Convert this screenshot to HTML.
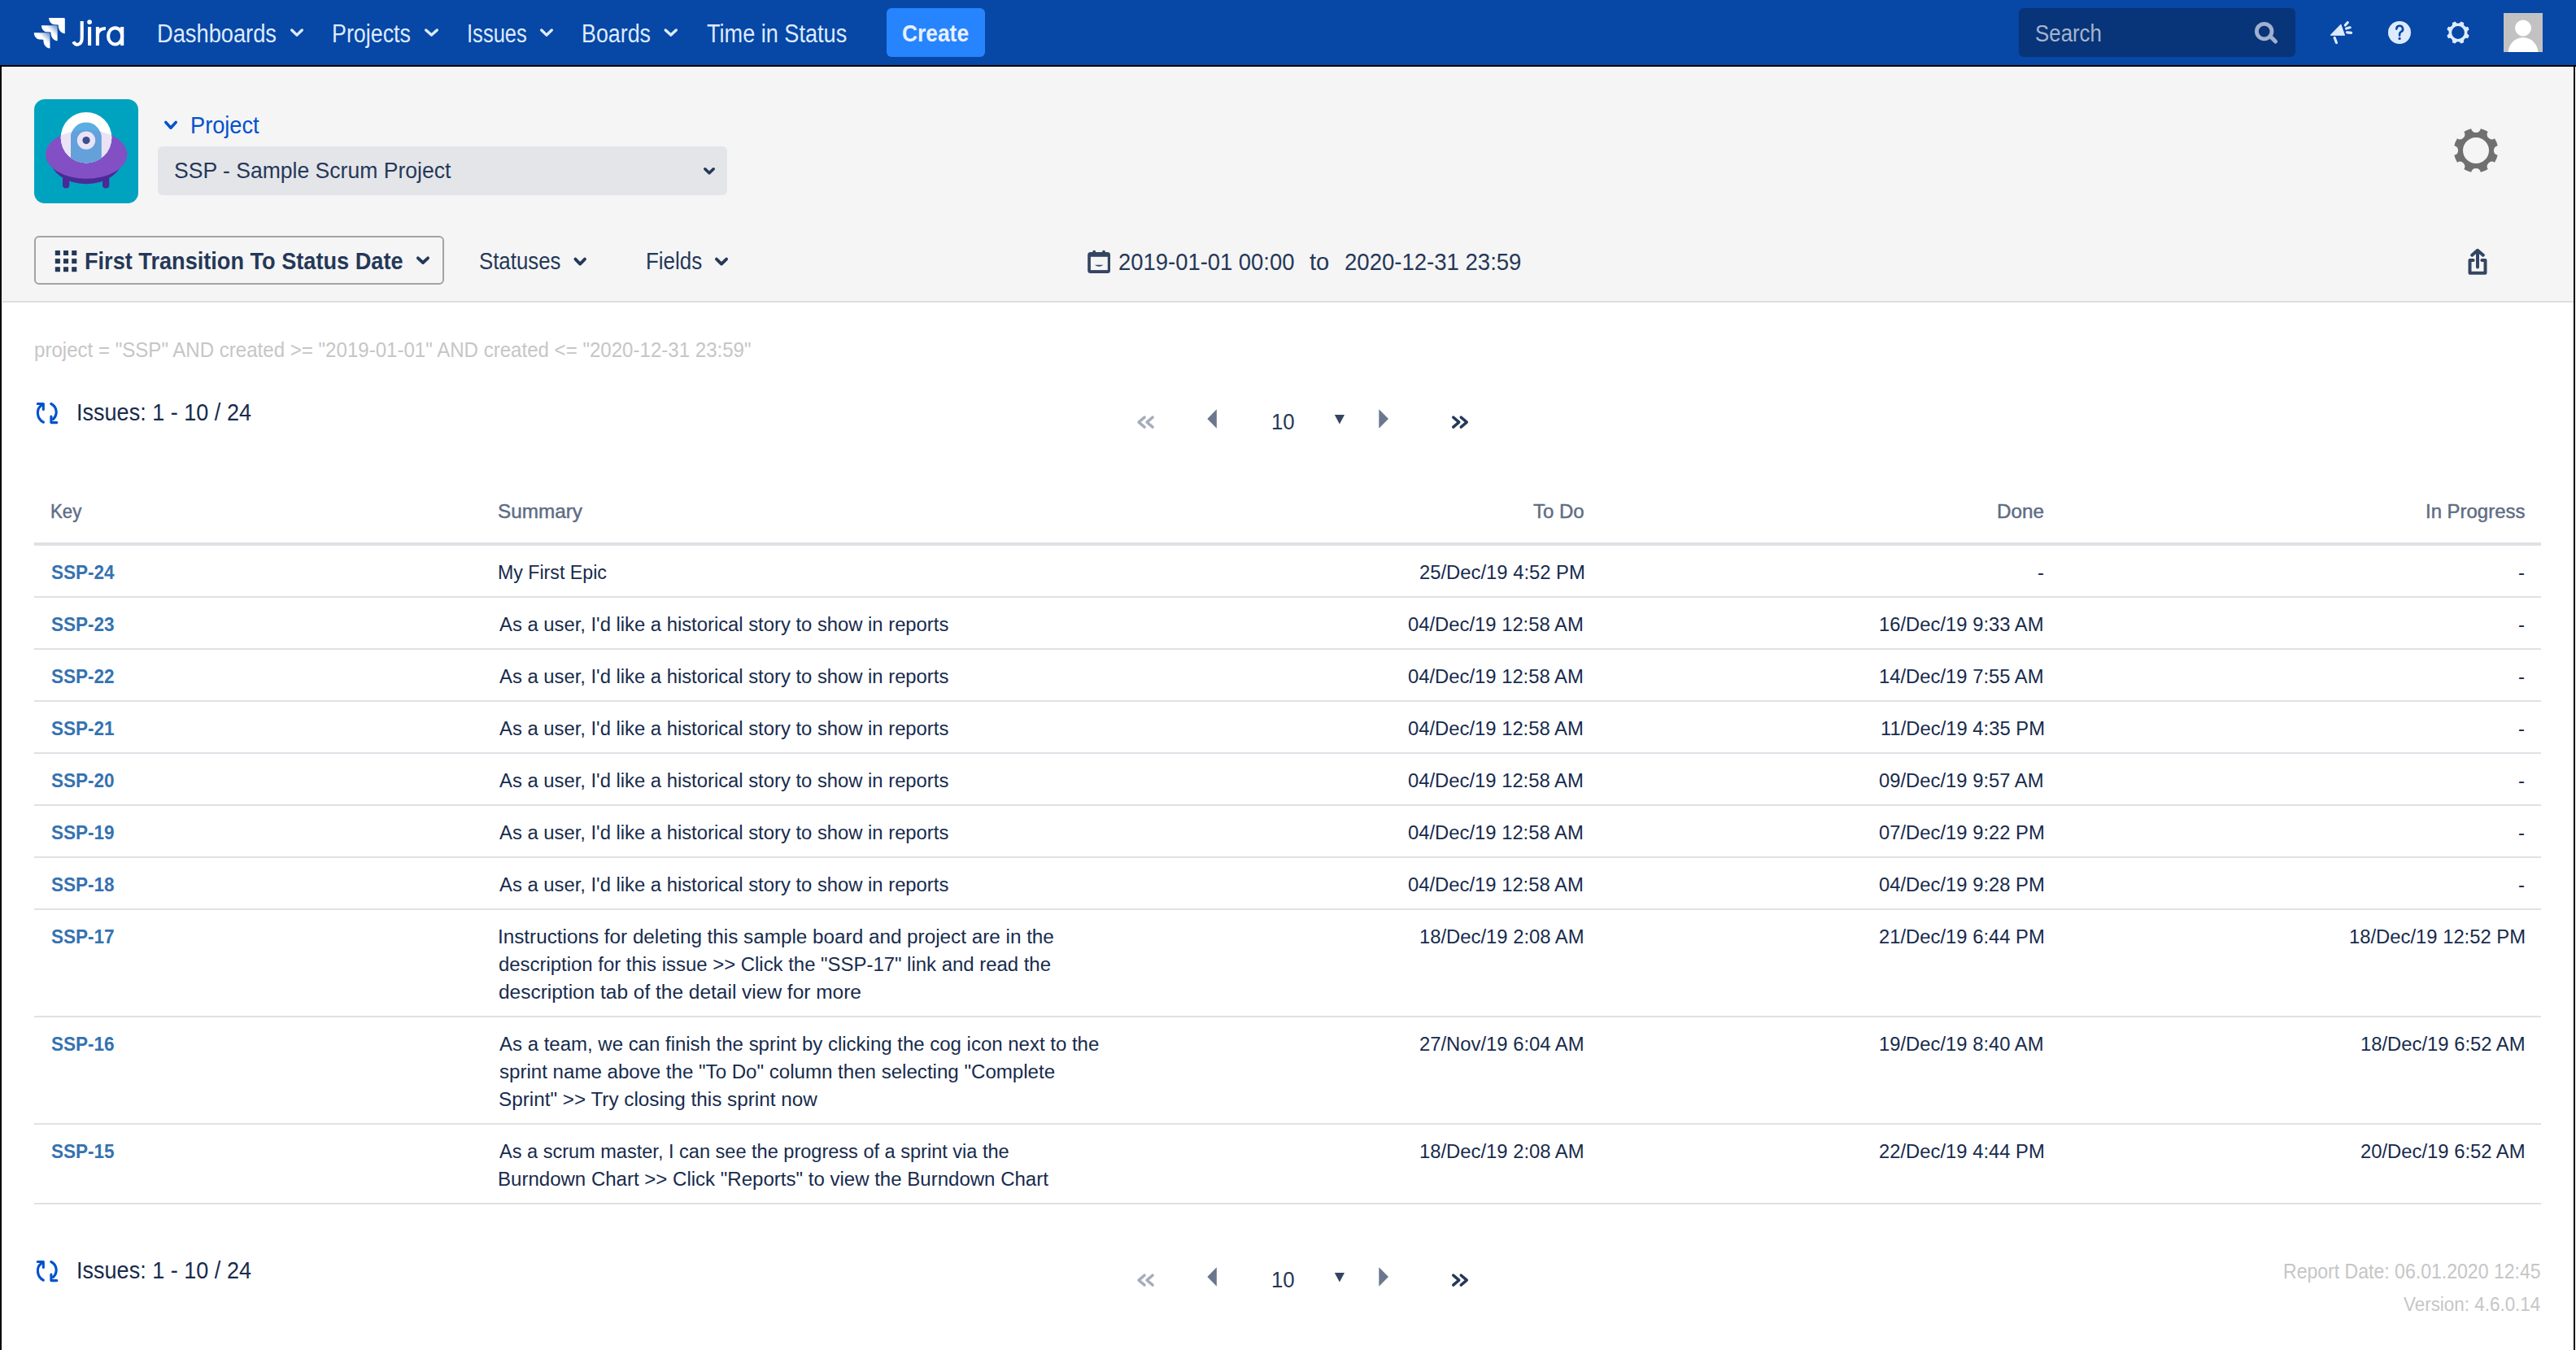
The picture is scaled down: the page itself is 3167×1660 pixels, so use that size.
<!DOCTYPE html>
<html><head><meta charset="utf-8"><style>
html,body{margin:0;padding:0;width:3167px;height:1660px;overflow:hidden;background:#fff;font-family:"Liberation Sans",sans-serif}
.r{position:absolute}
.t{position:absolute;white-space:pre;transform-origin:0 0;font-family:"Liberation Sans",sans-serif}
svg{position:absolute;left:0;top:0}
</style></head><body>
<div class="r" style="left:0;top:0;width:3167px;height:80px;background:#0747A6"></div>
<div class="r" style="left:0;top:80px;width:3167px;height:2px;background:#000"></div>
<div class="r" style="left:0;top:80px;width:2px;height:1580px;background:#000"></div>
<div class="r" style="left:3164px;top:80px;width:2px;height:1580px;background:#000"></div>
<div class="r" style="left:3px;top:82px;width:3161px;height:288px;background:#F5F5F5"></div>
<div class="r" style="left:3px;top:370px;width:3161px;height:2px;background:#DCDEE3"></div>
<div class="r" style="left:1090px;top:10px;width:121px;height:60px;border-radius:6px;background:#2684FF"></div>
<div class="r" style="left:2482px;top:10px;width:340px;height:60px;border-radius:6px;background:#083479"></div>
<div class="r" style="left:194px;top:180px;width:700px;height:60px;border-radius:6px;background:#E4E5E9"></div>
<div class="r" style="left:42px;top:290px;width:500px;height:56px;border:2px solid #A3A3A3;border-radius:6px"></div>
<div class="r" style="left:42px;top:667px;width:3082px;height:4px;background:#DFE1E6"></div>
<div class="r" style="left:42px;top:733px;width:3082px;height:2px;background:#DFE1E6"></div>
<div class="r" style="left:42px;top:797px;width:3082px;height:2px;background:#DFE1E6"></div>
<div class="r" style="left:42px;top:861px;width:3082px;height:2px;background:#DFE1E6"></div>
<div class="r" style="left:42px;top:925px;width:3082px;height:2px;background:#DFE1E6"></div>
<div class="r" style="left:42px;top:989px;width:3082px;height:2px;background:#DFE1E6"></div>
<div class="r" style="left:42px;top:1053px;width:3082px;height:2px;background:#DFE1E6"></div>
<div class="r" style="left:42px;top:1117px;width:3082px;height:2px;background:#DFE1E6"></div>
<div class="r" style="left:42px;top:1249px;width:3082px;height:2px;background:#DFE1E6"></div>
<div class="r" style="left:42px;top:1381px;width:3082px;height:2px;background:#DFE1E6"></div>
<div class="r" style="left:42px;top:1479px;width:3082px;height:2px;background:#DFE1E6"></div>
<svg width="3167" height="1660" viewBox="0 0 3167 1660">
<defs><linearGradient id="jg" x1="1" y1="0" x2="0.35" y2="0.65"><stop offset="0" stop-color="#fff" stop-opacity="0.35"/><stop offset="0.6" stop-color="#fff" stop-opacity="1"/></linearGradient></defs>
<path d="M60.10 22.00L78.36 22.00Q79.80 22.00 79.80 23.44L79.80 41.22C74.51 40.74 71.63 36.41 71.63 30.41L66.83 30.17C62.98 29.93 60.10 26.32 60.10 22.00Z" fill="#fff"/>
<path d="M50.95 31.15L69.21 31.15Q70.65 31.15 70.65 32.59L70.65 50.37C65.36 49.89 62.48 45.56 62.48 39.56L57.68 39.32C53.83 39.08 50.95 35.47 50.95 31.15Z" fill="url(#jg)"/>
<path d="M41.80 40.30L60.06 40.30Q61.50 40.30 61.50 41.74L61.50 59.52C56.21 59.04 53.33 54.71 53.33 48.71L48.53 48.47C44.68 48.23 41.80 44.62 41.80 40.30Z" fill="url(#jg)"/>
<g stroke="#fff" stroke-width="4.1" fill="none"><path d="M100.7 25.9V46.5C100.7 56.6 92.2 56.5 90.3 51.2"/><path d="M110.1 32.9V56M119.9 32.9V56M150.2 32.9V56"/><path d="M119.9 43.5C120.3 37 124.5 34.9 129.9 35"/><ellipse cx="141.6" cy="44.4" rx="8.55" ry="10.05"/></g><circle cx="110.1" cy="27.1" r="2.9" fill="#fff"/>
<path d="M358.7 37.0L365.0 43.1L371.3 37.0" stroke="#DEEBFF" stroke-width="3.4" fill="none" stroke-linecap="round" stroke-linejoin="round"/>
<path d="M523.7 37.0L530.5 43.1L537.3 37.0" stroke="#DEEBFF" stroke-width="3.4" fill="none" stroke-linecap="round" stroke-linejoin="round"/>
<path d="M665.7 37.0L672.0 43.1L678.3 37.0" stroke="#DEEBFF" stroke-width="3.4" fill="none" stroke-linecap="round" stroke-linejoin="round"/>
<path d="M818.2 37.0L824.8 43.1L831.3 37.0" stroke="#DEEBFF" stroke-width="3.4" fill="none" stroke-linecap="round" stroke-linejoin="round"/>
<circle cx="2783.7" cy="38.6" r="9.3" stroke="#A0B0CE" stroke-width="4.8" fill="none"/>
<path d="M2793 46.5L2797.5 51" stroke="#A0B0CE" stroke-width="5" stroke-linecap="round"/>
<path d="M2865.5 43.2L2877.9 30.5L2882.4 43.2Z" fill="#DEEBFF" stroke="#DEEBFF" stroke-width="1.2" stroke-linejoin="round"/>
<path d="M2870.2 46.5L2872.5 52.5M2883.3 31L2886.3 27.6M2884.6 35L2889.2 33.8M2885.6 39.8L2890.6 40.4" stroke="#DEEBFF" stroke-width="3.2" stroke-linecap="round"/>
<circle cx="2950" cy="40" r="14" fill="#DEEBFF"/>
<path d="M2946.3 35.6A3.9 3.9 0 1 1 2951.6 39.3Q2950.1 40.2 2950.1 42V43.6" stroke="#0747A6" stroke-width="2.6" fill="none" stroke-linecap="round"/>
<circle cx="2950.1" cy="47.4" r="1.6" fill="#0747A6"/>
<path d="M3025.39 26.42A14 14 0 0 1 3029.21 28.00A3.6 3.6 0 0 0 3034.00 32.79A14 14 0 0 1 3035.58 36.61A3.6 3.6 0 0 0 3035.58 43.39A14 14 0 0 1 3034.00 47.21A3.6 3.6 0 0 0 3029.21 52.00A14 14 0 0 1 3025.39 53.58A3.6 3.6 0 0 0 3018.61 53.58A14 14 0 0 1 3014.79 52.00A3.6 3.6 0 0 0 3010.00 47.21A14 14 0 0 1 3008.42 43.39A3.6 3.6 0 0 0 3008.42 36.61A14 14 0 0 1 3010.00 32.79A3.6 3.6 0 0 0 3014.79 28.00A14 14 0 0 1 3018.61 26.42A3.6 3.6 0 0 0 3025.39 26.42ZM3029.90 40.00A7.9 7.9 0 1 0 3014.10 40.00A7.9 7.9 0 1 0 3029.90 40.00Z" fill="#DEEBFF" fill-rule="evenodd"/>
<defs><clipPath id="av"><rect x="3078" y="16" width="48" height="48"/></clipPath></defs>
<rect x="3078" y="16" width="48" height="48" fill="#C2C2C2"/>
<g clip-path="url(#av)"><circle cx="3102" cy="34.5" r="10" fill="#fff"/><ellipse cx="3102" cy="66" rx="18.5" ry="20" fill="#fff"/></g>
<g transform="translate(42 122)"><defs><clipPath id="dome"><circle cx="64" cy="47.2" r="31.3"/></clipPath><clipPath id="sau"><ellipse cx="64.2" cy="67.9" rx="50.2" ry="29.9"/></clipPath></defs><rect width="128" height="128" rx="13" fill="#00A3BF"/><rect x="35" y="88" width="8.3" height="21.6" rx="4.1" fill="#4A2A96"/><rect x="84" y="88" width="8.3" height="21.6" rx="4.1" fill="#4A2A96"/><ellipse cx="64" cy="72" rx="45" ry="32.3" fill="#4A2A96"/><ellipse cx="64.2" cy="67.9" rx="50.2" ry="29.9" fill="#8250C4"/><circle cx="64" cy="47.2" r="31.3" fill="#fff"/><g clip-path="url(#sau)"><circle cx="64" cy="47.2" r="31.3" fill="#EAE3F5"/></g><g clip-path="url(#dome)"><path d="M45 47.2A18.8 18.8 0 0 1 82.6 47.2V90H45Z" fill="#5AAEE1"/><g clip-path="url(#sau)"><path d="M45 47.2A18.8 18.8 0 0 1 82.6 47.2V90H45Z" fill="#64A0DA"/></g></g><circle cx="64" cy="50.6" r="11.2" fill="#EAE3F5"/><circle cx="64" cy="50.6" r="4.6" fill="#3C4F8E"/></g>
<path d="M203.8 150.4L210.0 157.2L216.2 150.4" stroke="#0052CC" stroke-width="3.6" fill="none" stroke-linecap="round" stroke-linejoin="round"/>
<path d="M866.8 207.8L872.0 212.8L877.2 207.8" stroke="#253858" stroke-width="3.6" fill="none" stroke-linecap="round" stroke-linejoin="round"/>
<path d="M3049.83 158.33A27.3 27.3 0 0 1 3058.73 162.02A5.95 5.95 0 0 0 3066.98 170.27A27.3 27.3 0 0 1 3070.67 179.17A5.95 5.95 0 0 0 3070.67 190.83A27.3 27.3 0 0 1 3066.98 199.73A5.95 5.95 0 0 0 3058.73 207.98A27.3 27.3 0 0 1 3049.83 211.67A5.95 5.95 0 0 0 3038.17 211.67A27.3 27.3 0 0 1 3029.27 207.98A5.95 5.95 0 0 0 3021.02 199.73A27.3 27.3 0 0 1 3017.33 190.83A5.95 5.95 0 0 0 3017.33 179.17A27.3 27.3 0 0 1 3021.02 170.27A5.95 5.95 0 0 0 3029.27 162.02A27.3 27.3 0 0 1 3038.17 158.33A5.95 5.95 0 0 0 3049.83 158.33ZM3060.00 185.00A16 16 0 1 0 3028.00 185.00A16 16 0 1 0 3060.00 185.00Z" fill="#707070" fill-rule="evenodd"/>
<rect x="67.8" y="308.0" width="6.1" height="6" fill="#253858"/>
<rect x="67.8" y="318.1" width="6.1" height="6" fill="#253858"/>
<rect x="67.8" y="328.2" width="6.1" height="6" fill="#253858"/>
<rect x="78.0" y="308.0" width="6.1" height="6" fill="#253858"/>
<rect x="78.0" y="318.1" width="6.1" height="6" fill="#253858"/>
<rect x="78.0" y="328.2" width="6.1" height="6" fill="#253858"/>
<rect x="88.2" y="308.0" width="6.1" height="6" fill="#253858"/>
<rect x="88.2" y="318.1" width="6.1" height="6" fill="#253858"/>
<rect x="88.2" y="328.2" width="6.1" height="6" fill="#253858"/>
<path d="M513.9 317.3L520.0 323.0L526.1 317.3" stroke="#253858" stroke-width="3.8" fill="none" stroke-linecap="round" stroke-linejoin="round"/>
<path d="M707.4 318.6L713.2 324.6L719.0 318.6" stroke="#253858" stroke-width="3.8" fill="none" stroke-linecap="round" stroke-linejoin="round"/>
<path d="M880.9 318.6L887.0 324.6L893.1 318.6" stroke="#253858" stroke-width="3.8" fill="none" stroke-linecap="round" stroke-linejoin="round"/>
<rect x="1337.2" y="309.9" width="27.8" height="26" rx="3.5" fill="#344563"/><rect x="1340.9" y="315.8" width="20.9" height="16.3" fill="#F5F5F5"/><rect x="1343.4" y="307.8" width="3.6" height="4" rx="1.5" fill="#344563"/><rect x="1355.2" y="307.8" width="3.6" height="4" rx="1.5" fill="#344563"/><path d="M1345.8 325.8H1356.5Q1351.2 329.5 1345.8 325.8Z" fill="#344563"/>
<path d="M3046 310V328.5M3039.2 313.8L3046 307.8L3052.8 313.8M3040.6 320H3036.5V335.8H3055.5V320H3051.4" stroke="#344563" stroke-width="4" fill="none" stroke-linecap="round" stroke-linejoin="round"/>
<g transform="translate(0 0)" fill="none" stroke="#0052CC" stroke-width="3.1" stroke-linecap="round" stroke-linejoin="round"><path d="M53.3 519.2C45 514.5 44.2 503.5 50.8 498.6"/><path d="M46.3 496.5H53.3V503.4"/><path d="M62.8 496.5C70.8 500.5 70.8 510.5 65.3 515.5"/><path d="M62.9 512V519.6H69.8"/></g>
<g transform="translate(0 0)"><path d="M1407.1 513.1L1400.0 519.1L1407.1 525.1" stroke="#A5ADBA" stroke-width="3.4" fill="none" stroke-linecap="round" stroke-linejoin="round"/><path d="M1417.1 513.1L1410.0 519.1L1417.1 525.1" stroke="#A5ADBA" stroke-width="3.4" fill="none" stroke-linecap="round" stroke-linejoin="round"/><path d="M1495.8 503.2L1484.3 515L1495.8 526.8Z" fill="#6B778C"/><path d="M1640.8 510L1653 510L1646.9 521.6Z" fill="#344563"/><path d="M1695.3 503.2L1707 515L1695.3 526.8Z" fill="#6B778C"/><path d="M1786.7 513.1L1793.8 519.1L1786.7 525.1" stroke="#253858" stroke-width="3.4" fill="none" stroke-linecap="round" stroke-linejoin="round"/><path d="M1796.2 513.1L1803.3 519.1L1796.2 525.1" stroke="#253858" stroke-width="3.4" fill="none" stroke-linecap="round" stroke-linejoin="round"/></g>
<g transform="translate(0 1055)" fill="none" stroke="#0052CC" stroke-width="3.1" stroke-linecap="round" stroke-linejoin="round"><path d="M53.3 519.2C45 514.5 44.2 503.5 50.8 498.6"/><path d="M46.3 496.5H53.3V503.4"/><path d="M62.8 496.5C70.8 500.5 70.8 510.5 65.3 515.5"/><path d="M62.9 512V519.6H69.8"/></g>
<g transform="translate(0 1055)"><path d="M1407.1 513.1L1400.0 519.1L1407.1 525.1" stroke="#A5ADBA" stroke-width="3.4" fill="none" stroke-linecap="round" stroke-linejoin="round"/><path d="M1417.1 513.1L1410.0 519.1L1417.1 525.1" stroke="#A5ADBA" stroke-width="3.4" fill="none" stroke-linecap="round" stroke-linejoin="round"/><path d="M1495.8 503.2L1484.3 515L1495.8 526.8Z" fill="#6B778C"/><path d="M1640.8 510L1653 510L1646.9 521.6Z" fill="#344563"/><path d="M1695.3 503.2L1707 515L1695.3 526.8Z" fill="#6B778C"/><path d="M1786.7 513.1L1793.8 519.1L1786.7 525.1" stroke="#253858" stroke-width="3.4" fill="none" stroke-linecap="round" stroke-linejoin="round"/><path d="M1796.2 513.1L1803.3 519.1L1796.2 525.1" stroke="#253858" stroke-width="3.4" fill="none" stroke-linecap="round" stroke-linejoin="round"/></g>
</svg>
<span class="t" style="left:193.2px;top:25.7px;font-size:30.43px;line-height:30.43px;color:#DEEBFF;transform:scaleX(0.8960)">Dashboards</span>
<span class="t" style="left:408.2px;top:25.7px;font-size:30.43px;line-height:30.43px;color:#DEEBFF;transform:scaleX(0.8822)">Projects</span>
<span class="t" style="left:573.8px;top:25.7px;font-size:30.43px;line-height:30.43px;color:#DEEBFF;transform:scaleX(0.8400)">Issues</span>
<span class="t" style="left:715.2px;top:25.7px;font-size:30.43px;line-height:30.43px;color:#DEEBFF;transform:scaleX(0.8813)">Boards</span>
<span class="t" style="left:869.0px;top:25.7px;font-size:30.43px;line-height:30.43px;color:#DEEBFF;transform:scaleX(0.8908)">Time in Status</span>
<span class="t" style="left:1109.1px;top:27.0px;font-size:28.99px;line-height:28.99px;color:#E9F0FF;font-weight:bold;transform:scaleX(0.9095)">Create</span>
<span class="t" style="left:2502.1px;top:27.0px;font-size:28.99px;line-height:28.99px;color:#A5B4CE;transform:scaleX(0.8921)">Search</span>
<span class="t" style="left:233.8px;top:138.5px;font-size:30.00px;line-height:30.00px;color:#0052CC;transform:scaleX(0.9062)">Project</span>
<span class="t" style="left:214.1px;top:195.1px;font-size:28.26px;line-height:28.26px;color:#253858;transform:scaleX(0.9397)">SSP - Sample Scrum Project</span>
<span class="t" style="left:104.1px;top:306.8px;font-size:29.13px;line-height:29.13px;color:#253858;font-weight:bold;transform:scaleX(0.9317)">First Transition To Status Date</span>
<span class="t" style="left:588.5px;top:306.7px;font-size:28.99px;line-height:28.99px;color:#253858;transform:scaleX(0.8900)">Statuses</span>
<span class="t" style="left:793.6px;top:306.7px;font-size:28.99px;line-height:28.99px;color:#253858;transform:scaleX(0.8945)">Fields</span>
<span class="t" style="left:1374.5px;top:306.6px;font-size:29.28px;line-height:29.28px;color:#253858;transform:scaleX(0.9369)">2019-01-01 00:00</span>
<span class="t" style="left:1610.0px;top:306.6px;font-size:29.28px;line-height:29.28px;color:#253858;transform:scaleX(0.9946)">to</span>
<span class="t" style="left:1652.8px;top:306.6px;font-size:29.28px;line-height:29.28px;color:#253858;transform:scaleX(0.9410)">2020-12-31 23:59</span>
<span class="t" style="left:41.6px;top:418.3px;font-size:25.07px;line-height:25.07px;color:#C6C6C6;transform:scaleX(0.9604)">project = "SSP" AND created &gt;= "2019-01-01" AND created &lt;= "2020-12-31 23:59"</span>
<span class="t" style="left:94.1px;top:493.0px;font-size:28.99px;line-height:28.99px;color:#172B4D;transform:scaleX(0.9331)">Issues: 1 - 10 / 24</span>
<span class="t" style="left:1562.5px;top:504.1px;font-size:28.26px;line-height:28.26px;color:#253858;transform:scaleX(0.9125)">10</span>
<span class="t" style="left:94.1px;top:1548.0px;font-size:28.99px;line-height:28.99px;color:#172B4D;transform:scaleX(0.9331)">Issues: 1 - 10 / 24</span>
<span class="t" style="left:1562.5px;top:1559.1px;font-size:28.26px;line-height:28.26px;color:#253858;transform:scaleX(0.9125)">10</span>
<span class="t" style="left:61.7px;top:617.0px;font-size:24.20px;line-height:24.20px;color:#5E6C84;-webkit-text-stroke:0.45px #5E6C84;transform:scaleX(0.9186)">Key</span>
<span class="t" style="left:612.2px;top:617.0px;font-size:24.20px;line-height:24.20px;color:#5E6C84;-webkit-text-stroke:0.45px #5E6C84;transform:scaleX(1.0040)">Summary</span>
<span class="t" style="left:1885.0px;top:617.0px;font-size:24.20px;line-height:24.20px;color:#5E6C84;-webkit-text-stroke:0.45px #5E6C84;transform:scaleX(0.9915)">To Do</span>
<span class="t" style="left:2455.0px;top:617.0px;font-size:24.20px;line-height:24.20px;color:#5E6C84;-webkit-text-stroke:0.45px #5E6C84;transform:scaleX(1.0041)">Done</span>
<span class="t" style="left:2981.7px;top:617.0px;font-size:24.20px;line-height:24.20px;color:#5E6C84;-webkit-text-stroke:0.45px #5E6C84;transform:scaleX(0.9894)">In Progress</span>
<span class="t" style="left:62.6px;top:691.7px;font-size:24.64px;line-height:24.64px;color:#3572B0;font-weight:bold;transform:scaleX(0.9146)">SSP-24</span>
<span class="t" style="left:612.4px;top:691.7px;font-size:24.64px;line-height:24.64px;color:#172B4D;transform:scaleX(0.9409)">My First Epic</span>
<span class="t" style="left:1744.7px;top:691.7px;font-size:24.64px;line-height:24.64px;color:#172B4D;transform:scaleX(0.9668)">25/Dec/19 4:52 PM</span>
<span class="t" style="left:2504.9px;top:691.7px;font-size:24.64px;line-height:24.64px;color:#172B4D;transform:scaleX(0.9668)">-</span>
<span class="t" style="left:3096.3px;top:691.7px;font-size:24.64px;line-height:24.64px;color:#172B4D;transform:scaleX(0.9668)">-</span>
<span class="t" style="left:62.6px;top:755.7px;font-size:24.64px;line-height:24.64px;color:#3572B0;font-weight:bold;transform:scaleX(0.9146)">SSP-23</span>
<span class="t" style="left:614.0px;top:755.7px;font-size:24.64px;line-height:24.64px;color:#172B4D;transform:scaleX(0.9667)">As a user, I'd like a historical story to show in reports</span>
<span class="t" style="left:1731.4px;top:755.7px;font-size:24.64px;line-height:24.64px;color:#172B4D;transform:scaleX(0.9668)">04/Dec/19 12:58 AM</span>
<span class="t" style="left:2310.3px;top:755.7px;font-size:24.64px;line-height:24.64px;color:#172B4D;transform:scaleX(0.9668)">16/Dec/19 9:33 AM</span>
<span class="t" style="left:3096.3px;top:755.7px;font-size:24.64px;line-height:24.64px;color:#172B4D;transform:scaleX(0.9668)">-</span>
<span class="t" style="left:62.6px;top:819.7px;font-size:24.64px;line-height:24.64px;color:#3572B0;font-weight:bold;transform:scaleX(0.9146)">SSP-22</span>
<span class="t" style="left:614.0px;top:819.7px;font-size:24.64px;line-height:24.64px;color:#172B4D;transform:scaleX(0.9667)">As a user, I'd like a historical story to show in reports</span>
<span class="t" style="left:1731.4px;top:819.7px;font-size:24.64px;line-height:24.64px;color:#172B4D;transform:scaleX(0.9668)">04/Dec/19 12:58 AM</span>
<span class="t" style="left:2310.3px;top:819.7px;font-size:24.64px;line-height:24.64px;color:#172B4D;transform:scaleX(0.9668)">14/Dec/19 7:55 AM</span>
<span class="t" style="left:3096.3px;top:819.7px;font-size:24.64px;line-height:24.64px;color:#172B4D;transform:scaleX(0.9668)">-</span>
<span class="t" style="left:62.6px;top:883.7px;font-size:24.64px;line-height:24.64px;color:#3572B0;font-weight:bold;transform:scaleX(0.9146)">SSP-21</span>
<span class="t" style="left:614.0px;top:883.7px;font-size:24.64px;line-height:24.64px;color:#172B4D;transform:scaleX(0.9667)">As a user, I'd like a historical story to show in reports</span>
<span class="t" style="left:1731.4px;top:883.7px;font-size:24.64px;line-height:24.64px;color:#172B4D;transform:scaleX(0.9668)">04/Dec/19 12:58 AM</span>
<span class="t" style="left:2312.0px;top:883.7px;font-size:24.64px;line-height:24.64px;color:#172B4D;transform:scaleX(0.9668)">11/Dec/19 4:35 PM</span>
<span class="t" style="left:3096.3px;top:883.7px;font-size:24.64px;line-height:24.64px;color:#172B4D;transform:scaleX(0.9668)">-</span>
<span class="t" style="left:62.6px;top:947.7px;font-size:24.64px;line-height:24.64px;color:#3572B0;font-weight:bold;transform:scaleX(0.9146)">SSP-20</span>
<span class="t" style="left:614.0px;top:947.7px;font-size:24.64px;line-height:24.64px;color:#172B4D;transform:scaleX(0.9667)">As a user, I'd like a historical story to show in reports</span>
<span class="t" style="left:1731.4px;top:947.7px;font-size:24.64px;line-height:24.64px;color:#172B4D;transform:scaleX(0.9668)">04/Dec/19 12:58 AM</span>
<span class="t" style="left:2310.3px;top:947.7px;font-size:24.64px;line-height:24.64px;color:#172B4D;transform:scaleX(0.9668)">09/Dec/19 9:57 AM</span>
<span class="t" style="left:3096.3px;top:947.7px;font-size:24.64px;line-height:24.64px;color:#172B4D;transform:scaleX(0.9668)">-</span>
<span class="t" style="left:62.6px;top:1011.7px;font-size:24.64px;line-height:24.64px;color:#3572B0;font-weight:bold;transform:scaleX(0.9146)">SSP-19</span>
<span class="t" style="left:614.0px;top:1011.7px;font-size:24.64px;line-height:24.64px;color:#172B4D;transform:scaleX(0.9667)">As a user, I'd like a historical story to show in reports</span>
<span class="t" style="left:1731.4px;top:1011.7px;font-size:24.64px;line-height:24.64px;color:#172B4D;transform:scaleX(0.9668)">04/Dec/19 12:58 AM</span>
<span class="t" style="left:2310.3px;top:1011.7px;font-size:24.64px;line-height:24.64px;color:#172B4D;transform:scaleX(0.9668)">07/Dec/19 9:22 PM</span>
<span class="t" style="left:3096.3px;top:1011.7px;font-size:24.64px;line-height:24.64px;color:#172B4D;transform:scaleX(0.9668)">-</span>
<span class="t" style="left:62.6px;top:1075.7px;font-size:24.64px;line-height:24.64px;color:#3572B0;font-weight:bold;transform:scaleX(0.9146)">SSP-18</span>
<span class="t" style="left:614.0px;top:1075.7px;font-size:24.64px;line-height:24.64px;color:#172B4D;transform:scaleX(0.9667)">As a user, I'd like a historical story to show in reports</span>
<span class="t" style="left:1731.4px;top:1075.7px;font-size:24.64px;line-height:24.64px;color:#172B4D;transform:scaleX(0.9668)">04/Dec/19 12:58 AM</span>
<span class="t" style="left:2310.3px;top:1075.7px;font-size:24.64px;line-height:24.64px;color:#172B4D;transform:scaleX(0.9668)">04/Dec/19 9:28 PM</span>
<span class="t" style="left:3096.3px;top:1075.7px;font-size:24.64px;line-height:24.64px;color:#172B4D;transform:scaleX(0.9668)">-</span>
<span class="t" style="left:62.6px;top:1139.7px;font-size:24.64px;line-height:24.64px;color:#3572B0;font-weight:bold;transform:scaleX(0.9146)">SSP-17</span>
<span class="t" style="left:611.6px;top:1139.7px;font-size:24.64px;line-height:24.64px;color:#172B4D;transform:scaleX(0.9854)">Instructions for deleting this sample board and project are in the</span>
<span class="t" style="left:612.6px;top:1173.7px;font-size:24.64px;line-height:24.64px;color:#172B4D;transform:scaleX(0.9711)">description for this issue &gt;&gt; Click the "SSP-17" link and read the</span>
<span class="t" style="left:612.6px;top:1207.7px;font-size:24.64px;line-height:24.64px;color:#172B4D;transform:scaleX(0.9932)">description tab of the detail view for more</span>
<span class="t" style="left:1744.7px;top:1139.7px;font-size:24.64px;line-height:24.64px;color:#172B4D;transform:scaleX(0.9668)">18/Dec/19 2:08 AM</span>
<span class="t" style="left:2310.3px;top:1139.7px;font-size:24.64px;line-height:24.64px;color:#172B4D;transform:scaleX(0.9668)">21/Dec/19 6:44 PM</span>
<span class="t" style="left:2888.4px;top:1139.7px;font-size:24.64px;line-height:24.64px;color:#172B4D;transform:scaleX(0.9668)">18/Dec/19 12:52 PM</span>
<span class="t" style="left:62.6px;top:1271.7px;font-size:24.64px;line-height:24.64px;color:#3572B0;font-weight:bold;transform:scaleX(0.9146)">SSP-16</span>
<span class="t" style="left:613.6px;top:1271.7px;font-size:24.64px;line-height:24.64px;color:#172B4D;transform:scaleX(0.9740)">As a team, we can finish the sprint by clicking the cog icon next to the</span>
<span class="t" style="left:613.6px;top:1305.7px;font-size:24.64px;line-height:24.64px;color:#172B4D;transform:scaleX(0.9782)">sprint name above the "To Do" column then selecting "Complete</span>
<span class="t" style="left:612.6px;top:1339.7px;font-size:24.64px;line-height:24.64px;color:#172B4D;transform:scaleX(0.9856)">Sprint" &gt;&gt; Try closing this sprint now</span>
<span class="t" style="left:1744.7px;top:1271.7px;font-size:24.64px;line-height:24.64px;color:#172B4D;transform:scaleX(0.9668)">27/Nov/19 6:04 AM</span>
<span class="t" style="left:2310.3px;top:1271.7px;font-size:24.64px;line-height:24.64px;color:#172B4D;transform:scaleX(0.9668)">19/Dec/19 8:40 AM</span>
<span class="t" style="left:2901.7px;top:1271.7px;font-size:24.64px;line-height:24.64px;color:#172B4D;transform:scaleX(0.9668)">18/Dec/19 6:52 AM</span>
<span class="t" style="left:62.6px;top:1403.7px;font-size:24.64px;line-height:24.64px;color:#3572B0;font-weight:bold;transform:scaleX(0.9146)">SSP-15</span>
<span class="t" style="left:613.6px;top:1403.7px;font-size:24.64px;line-height:24.64px;color:#172B4D;transform:scaleX(0.9559)">As a scrum master, I can see the progress of a sprint via the</span>
<span class="t" style="left:611.6px;top:1437.7px;font-size:24.64px;line-height:24.64px;color:#172B4D;transform:scaleX(0.9759)">Burndown Chart &gt;&gt; Click "Reports" to view the Burndown Chart</span>
<span class="t" style="left:1744.7px;top:1403.7px;font-size:24.64px;line-height:24.64px;color:#172B4D;transform:scaleX(0.9668)">18/Dec/19 2:08 AM</span>
<span class="t" style="left:2310.3px;top:1403.7px;font-size:24.64px;line-height:24.64px;color:#172B4D;transform:scaleX(0.9668)">22/Dec/19 4:44 PM</span>
<span class="t" style="left:2901.7px;top:1403.7px;font-size:24.64px;line-height:24.64px;color:#172B4D;transform:scaleX(0.9668)">20/Dec/19 6:52 AM</span>
<span class="t" style="left:2807.0px;top:1551.4px;font-size:25.22px;line-height:25.22px;color:#C6C6C6;transform:scaleX(0.9141)">Report Date: 06.01.2020 12:45</span>
<span class="t" style="left:2954.7px;top:1591.9px;font-size:24.49px;line-height:24.49px;color:#C6C6C6;transform:scaleX(0.9157)">Version: 4.6.0.14</span>
</body></html>
